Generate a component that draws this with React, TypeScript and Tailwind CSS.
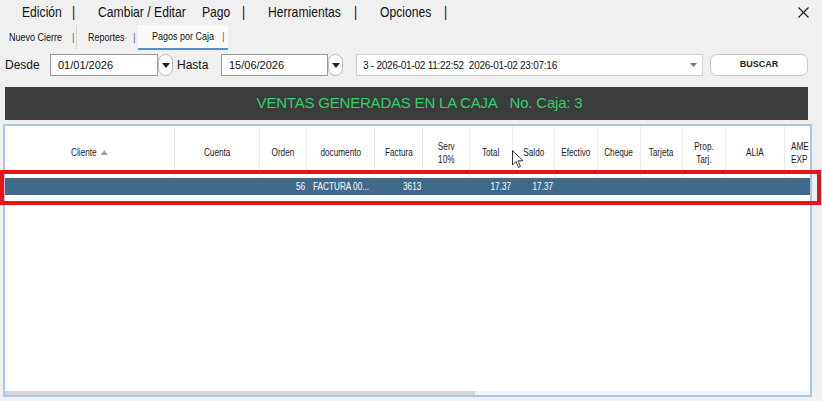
import React from "react";

type Col = { label: string[]; w: number; sort?: boolean; left?: boolean };

const cols: Col[] = [
  { label: ["Cliente"], w: 170, sort: true },
  { label: ["Cuenta"], w: 85 },
  { label: ["Orden"], w: 47 },
  { label: ["documento"], w: 68 },
  { label: ["Factura"], w: 48 },
  { label: ["Serv", "10%"], w: 47 },
  { label: ["Total"], w: 43 },
  { label: ["Saldo"], w: 42 },
  { label: ["Efectivo"], w: 43 },
  { label: ["Cheque"], w: 43 },
  { label: ["Tarjeta"], w: 42 },
  { label: ["Prop.", "Tarj."], w: 43 },
  { label: ["ALIA"], w: 59 },
  { label: ["AME", "EXP"], w: 40, left: true },
];

const rowCells: { text: string; align: "left" | "right" }[] = [
  { text: "", align: "left" },
  { text: "", align: "left" },
  { text: "56", align: "right" },
  { text: "FACTURA 00...", align: "left" },
  { text: "3613", align: "right" },
  { text: "", align: "left" },
  { text: "17.37", align: "right" },
  { text: "17.37", align: "right" },
  { text: "", align: "left" },
  { text: "", align: "left" },
  { text: "", align: "left" },
  { text: "", align: "left" },
  { text: "", align: "left" },
  { text: "", align: "left" },
];

function DropBtn() {
  return (
    <div className="w-[15px] h-[22px] rounded-full border border-[#b8b8b8] bg-white flex items-center justify-center shrink-0">
      <svg width="8" height="5" viewBox="0 0 8 5">
        <path d="M0 0 L8 0 L4 5 Z" fill="#222" />
      </svg>
    </div>
  );
}

function MenuItem({ w, text }: { w: number; text: string }) {
  return (
    <div style={{ width: w }} className="shrink-0 whitespace-nowrap">
      <span className="inline-block origin-left scale-x-[0.81]">{text}</span>
    </div>
  );
}

function TabText({ text }: { text: string }) {
  return <span className="inline-block whitespace-nowrap origin-left scale-x-[0.9]">{text}</span>;
}

export default function App() {
  return (
    <div className="relative w-[822px] h-[401px] overflow-hidden bg-[#f0f0f0] font-['Liberation_Sans',Arial,sans-serif] text-[#111]">
      {/* Menu bar */}
      <div className="h-[25px] flex items-center text-[15px] pl-[22px]">
        <MenuItem w={50} text="Edición" />
        <MenuItem w={26} text="|" />
        <MenuItem w={104} text="Cambiar / Editar" />
        <MenuItem w={40} text="Pago" />
        <MenuItem w={26} text="|" />
        <MenuItem w={86} text="Herramientas" />
        <MenuItem w={26} text="|" />
        <MenuItem w={64} text="Opciones" />
        <MenuItem w={10} text="|" />
        <div className="ml-auto mr-[13px]">
          <svg width="11" height="11" viewBox="0 0 11 11">
            <path d="M0.5 0.5 L10.5 10.5 M10.5 0.5 L0.5 10.5" stroke="#222" strokeWidth="1.2" />
          </svg>
        </div>
      </div>

      {/* Tabs */}
      <div className="h-[25px] flex items-stretch text-[10px]">
        <div className="flex items-center pl-[9px] w-[77px] border-r border-[#d4d4d4] shrink-0">
          <div className="w-[63px]">
            <TabText text="Nuevo Cierre" />
          </div>
          <span className="text-[#666]">|</span>
        </div>
        <div className="flex items-center pl-[11px] w-[61px] shrink-0">
          <div className="w-[45px]">
            <TabText text="Reportes" />
          </div>
          <span className="text-[#666]">|</span>
        </div>
        <div className="flex items-center pl-[14px] w-[90px] bg-[#fafafa] border-b-2 border-[#4d8fd6] shrink-0">
          <div className="w-[70px]">
            <TabText text="Pagos por Caja" />
          </div>
          <span className="text-[#666]">|</span>
        </div>
      </div>

      {/* Filters */}
      <div className="flex items-center h-[22px] mt-[4px] text-[12px]">
        <span className="ml-[5px] w-[45px] shrink-0">Desde</span>
        <div className="w-[108px] h-[22px] border border-[#9a9a9a] bg-white flex items-center pl-[7px] text-[11px] shrink-0">
          01/01/2026
        </div>
        <DropBtn />
        <span className="ml-[4px] w-[44px] shrink-0">Hasta</span>
        <div className="w-[107px] h-[22px] border border-[#9a9a9a] bg-white flex items-center pl-[7px] text-[11px] shrink-0">
          15/06/2026
        </div>
        <DropBtn />
        <div className="ml-[13px] w-[347px] h-[22px] border border-[#d0d0d0] bg-white flex items-center pl-[6px] text-[10px] tracking-[-0.25px] shrink-0">
          <span className="whitespace-nowrap">3 - 2026-01-02 11:22:52&nbsp;&nbsp;2026-01-02 23:07:16</span>
          <svg className="ml-auto mr-[5px]" width="7" height="4" viewBox="0 0 7 4">
            <path d="M0 0 L7 0 L3.5 4 Z" fill="#777" />
          </svg>
        </div>
        <div className="ml-[7px] w-[98px] h-[22px] rounded-[7px] border border-[#c8c8c8] bg-white flex items-center justify-center text-[9px] font-bold text-[#222] shrink-0">
          BUSCAR
        </div>
      </div>

      {/* Dark title bar */}
      <div className="mt-[11px] ml-[5px] w-[803px] h-[33px] bg-[#3c3c3c] flex items-center justify-center pl-[26px]">
        <span className="whitespace-nowrap text-[15px] tracking-[-0.2px] text-[#2fd06a]">
          VENTAS GENERADAS EN LA CAJA&nbsp;&nbsp;&nbsp;No. Caja: 3
        </span>
      </div>

      {/* Grid */}
      <div className="mt-[4px] ml-[3px] w-[809px] h-[273px] border-2 border-[#a9c9ea] bg-white relative overflow-hidden">
        <div className="flex h-[51px] text-[10px] text-[#1a1a1a]">
          {cols.map((c, i) => (
            <div
              key={i}
              style={{ width: c.w }}
              className={`shrink-0 h-full border-r border-[#ececec] flex items-center pt-[2px] leading-[13px] ${c.left ? "justify-start pl-[6px]" : "justify-center text-center"}`}
            >
              <div className={`flex items-center whitespace-nowrap scale-x-[0.82] ${c.left ? "origin-left" : "origin-center"}`}>
                <div>
                  {c.label.map((l, j) => (
                    <div key={j}>{l}</div>
                  ))}
                </div>
                {c.sort && (
                  <svg className="ml-[5px]" width="9" height="5" viewBox="0 0 9 5">
                    <path d="M0 5 L9 5 L4.5 0 Z" fill="#a0a0a0" />
                  </svg>
                )}
              </div>
            </div>
          ))}
        </div>
        <div className="h-[1px] bg-[#f0f0f0]" />
        <div className="flex h-[17px] bg-[#3f6a8b] text-white text-[10px]">
          {cols.map((c, i) => (
            <div
              key={i}
              style={{ width: c.w }}
              className={`shrink-0 h-full flex items-center whitespace-nowrap ${rowCells[i].align === "right" ? "justify-end pr-[2px]" : "justify-start pl-[6px]"}`}
            >
              <span className={`inline-block scale-x-[0.82] ${rowCells[i].align === "right" ? "origin-right" : "origin-left"}`}>
                {rowCells[i].text}
              </span>
            </div>
          ))}
        </div>
        {/* horizontal scrollbar */}
        <div className="absolute left-0 right-0 bottom-0 h-[4px] bg-[#eef3f8]">
          <div className="h-full w-[470px] bg-[#d6d6d6]" />
        </div>
      </div>

      {/* Red highlight annotation */}
      <div className="absolute left-0 top-[170px] w-[821px] h-[35px] border-[4px] border-[#e8141c]" />

      {/* Mouse cursor */}
      <svg className="absolute left-[512px] top-[150px]" width="12" height="19" viewBox="0 0 12 19">
        <path d="M0.5 0.5 L0.5 15 L4 11.5 L6.5 17.5 L8.5 16.5 L6 10.8 L11 10.8 Z" fill="#fff" stroke="#333" strokeWidth="1" strokeLinejoin="round" />
      </svg>
    </div>
  );
}
